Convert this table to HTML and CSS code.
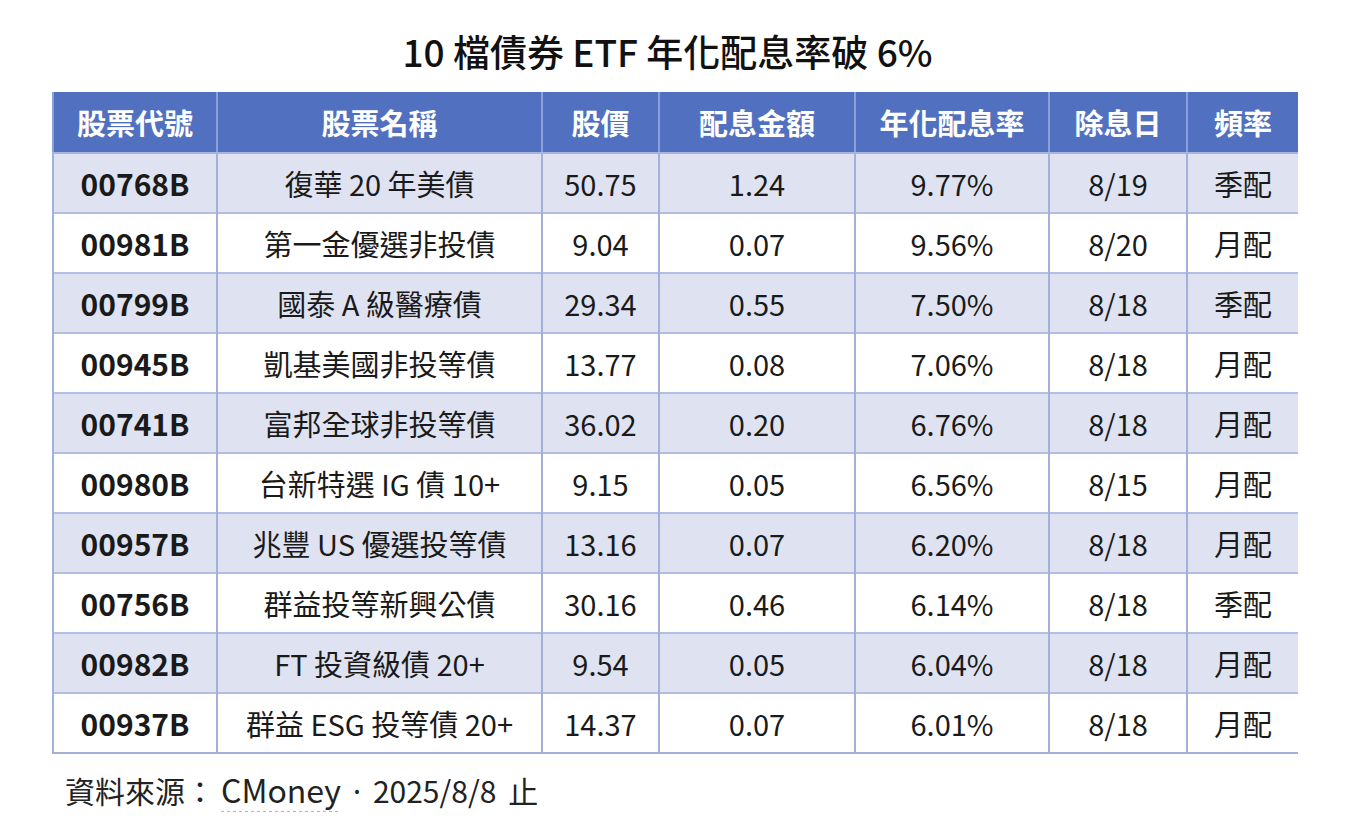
FILE: index.html
```html
<!DOCTYPE html>
<html lang="zh-Hant">
<head>
<meta charset="utf-8">
<title>10 檔債券 ETF 年化配息率破 6%</title>
<link rel="stylesheet" href="styles.css">
</head>
<body>
<div class="page">
  <h1 class="title">10 檔債券 ETF 年化配息率破 6%</h1>
  <table class="etf">
    <colgroup>
      <col class="c1"><col class="c2"><col class="c3"><col class="c4"><col class="c5"><col class="c6"><col class="c7">
    </colgroup>
    <thead>
      <tr><th>股票代號</th><th>股票名稱</th><th>股價</th><th>配息金額</th><th>年化配息率</th><th>除息日</th><th>頻率</th></tr>
    </thead>
    <tbody>
      <tr><td class="code">00768B</td><td>復華 20 年美債</td><td>50.75</td><td>1.24</td><td>9.77%</td><td>8/19</td><td>季配</td></tr>
      <tr><td class="code">00981B</td><td>第一金優選非投債</td><td>9.04</td><td>0.07</td><td>9.56%</td><td>8/20</td><td>月配</td></tr>
      <tr><td class="code">00799B</td><td>國泰 A 級醫療債</td><td>29.34</td><td>0.55</td><td>7.50%</td><td>8/18</td><td>季配</td></tr>
      <tr><td class="code">00945B</td><td>凱基美國非投等債</td><td>13.77</td><td>0.08</td><td>7.06%</td><td>8/18</td><td>月配</td></tr>
      <tr><td class="code">00741B</td><td>富邦全球非投等債</td><td>36.02</td><td>0.20</td><td>6.76%</td><td>8/18</td><td>月配</td></tr>
      <tr><td class="code">00980B</td><td>台新特選 IG 債 10+</td><td>9.15</td><td>0.05</td><td>6.56%</td><td>8/15</td><td>月配</td></tr>
      <tr><td class="code">00957B</td><td>兆豐 US 優選投等債</td><td>13.16</td><td>0.07</td><td>6.20%</td><td>8/18</td><td>月配</td></tr>
      <tr><td class="code">00756B</td><td>群益投等新興公債</td><td>30.16</td><td>0.46</td><td>6.14%</td><td>8/18</td><td>季配</td></tr>
      <tr><td class="code">00982B</td><td>FT 投資級債 20+</td><td>9.54</td><td>0.05</td><td>6.04%</td><td>8/18</td><td>月配</td></tr>
      <tr><td class="code">00937B</td><td>群益 ESG 投等債 20+</td><td>14.37</td><td>0.07</td><td>6.01%</td><td>8/18</td><td>月配</td></tr>
    </tbody>
  </table>
  <p class="source">資料來源：<span class="brand">CMoney</span><span class="dot">·</span><span class="date">2025/8/8</span><span class="until">止</span></p>
</div>
</body>
</html>
```
FILE: styles.css
```css
html, body {
  margin: 0;
  padding: 0;
  background: #ffffff;
}

body {
  font-family: "Noto Sans CJK TC", "Noto Sans", sans-serif;
  color: #1a1a1a;
}

.page {
  width: 1245px;
  margin-left: 52px;
  display: flex;
  flex-direction: column;
}

.title {
  margin: 0;
  height: 92px;
  display: flex;
  align-items: center;
  justify-content: center;
  padding-right: 14px;
  padding-top: 9px;
  box-sizing: border-box;
  font-size: 37px;
  font-weight: 500;
  color: #111;
  letter-spacing: 0;
}

.etf {
  border-collapse: collapse;
  table-layout: fixed;
  width: 1245px;
  border-left: 2px solid #a3b0da;
  border-bottom: 2px solid #a3b0da;
}

.c1 { width: 164px; }
.c2 { width: 325px; }
.c3 { width: 117px; }
.c4 { width: 196px; }
.c5 { width: 194px; }
.c6 { width: 138px; }
.c7 { width: 111px; }

.etf th {
  height: 60px;
  background: #5171c0;
  color: #ffffff;
  font-size: 29px;
  font-weight: 700;
  text-align: center;
  padding: 0;
  border-left: 2px solid #8aa0d8;
  border-bottom: 2px solid #a6b4e0;
}

.etf td {
  height: 58px;
  font-size: 29px;
  font-weight: 400;
  text-align: center;
  padding: 0;
  border-left: 2px solid #a3b0da;
  border-top: 2px solid #b3bfe2;
  color: #1a1a1a;
}

.etf tbody tr:nth-child(odd) td {
  background: #dfe3f1;
}

.etf tbody tr:nth-child(even) td {
  background: #ffffff;
}

.etf td.code {
  font-size: 30px;
  font-weight: 700;
}

.source {
  margin: 12px 0 0 13px;
  font-size: 30px;
  color: #222;
}

.brand {
  margin-left: 6px;
  font-size: 32px;
  text-decoration: underline dotted #e8a0b0;
  text-underline-offset: 8px;
}

.dot {
  font-family: "Noto Sans", sans-serif;
  padding: 0 12px;
}

.until {
  margin-left: 12px;
}
```
